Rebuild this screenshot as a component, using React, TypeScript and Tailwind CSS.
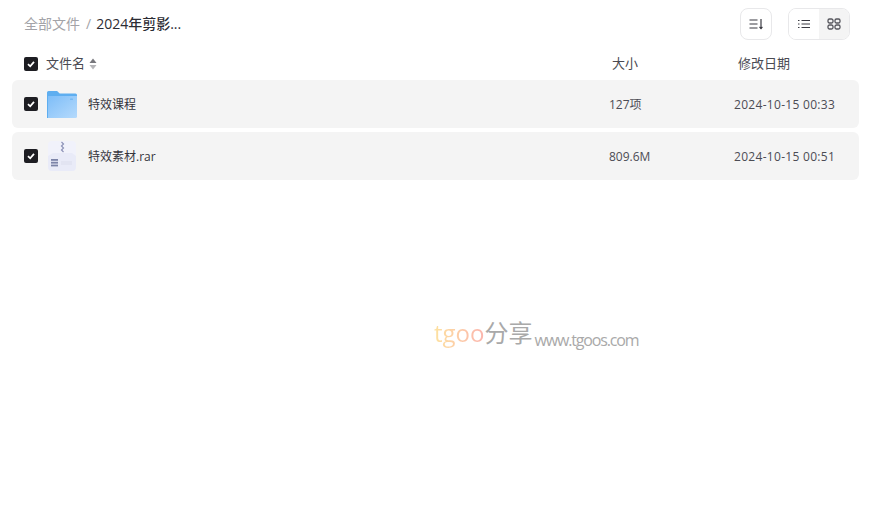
import type { ReactElement } from "react";

const FONT = "font-['Open_Sans','Noto_Sans_CJK_SC',sans-serif]";

type FileRow = {
  readonly name: string;
  readonly kind: "folder" | "rar";
  readonly size: string;
  readonly date: string;
};

const ROWS: readonly FileRow[] = [
  { name: "特效课程", kind: "folder", size: "127项", date: "2024-10-15 00:33" },
  { name: "特效素材.rar", kind: "rar", size: "809.6M", date: "2024-10-15 00:51" },
];

function Checked(): ReactElement {
  return (
    <span className="flex h-[14px] w-[14px] shrink-0 items-center justify-center rounded-[2px] bg-[#1d1d22]">
      <svg width="10" height="10" viewBox="0 0 10 10" fill="none">
        <path d="M2 5.2 4.2 7.3 8 2.9" stroke="#fff" strokeWidth="1.8" />
      </svg>
    </span>
  );
}

function FolderIcon(): ReactElement {
  return (
    <svg width="30" height="27" viewBox="0 0 30 27" className="shrink-0">
      <defs>
        <linearGradient id="folderFront" x1="0" y1="0" x2="1" y2="1">
          <stop offset="0" stopColor="#7dbdf8" />
          <stop offset="1" stopColor="#b5dafc" />
        </linearGradient>
      </defs>
      <path d="M0 1.5A1.5 1.500 0 0 1 1.500 0h8.600l2.600 2.600H28.500A1.500 1.500 0 0 1 30 4.100V10H0Z" fill="#5eaef0" />
      <path d="M0 5h30V25.500A1.500 1.500 0 0 1 28.500 27H1.500A1.500 1.500 0 0 1 0 25.500Z" fill="url(#folderFront)" />
      <path d="M0 5h1V27H0Z" fill="#5eaef0" />
      <rect x="23" y="7.500" width="3" height="1.500" rx=".5" fill="#5eaef0" opacity=".6" />
    </svg>
  );
}

function RarIcon(): ReactElement {
  return (
    <svg width="30" height="30" viewBox="0 0 30 30" className="shrink-0">
      <path d="M5 0h20a4 4 0 0 1 4 4v22a4 4 0 0 1-4 4H5a4 4 0 0 1-4-4V4a4 4 0 0 1 4-4Z" fill="#f1f2fb" />
      <path d="M1 15 6 12h19l4 3v11a4 4 0 0 1-4 4H5a4 4 0 0 1-4-4Z" fill="#e9ebf8" />
      <path d="M14.500 1 16.500 3 14.500 5 16.500 7 14.500 9 16.500 11" stroke="#8d93b8" strokeWidth="1.200" fill="none" />
      <rect x="4" y="18" width="7" height="1.800" fill="#7c84a8" />
      <rect x="4" y="20.800" width="7" height="1.800" fill="#7c84a8" />
      <rect x="4" y="23.600" width="7" height="1.800" fill="#7c84a8" />
      <rect x="14" y="20" width="11" height="4" fill="#e2e4f2" />
    </svg>
  );
}

export default function App(): ReactElement {
  return (
    <div className={`relative h-[514px] w-[874px] overflow-hidden bg-white ${FONT}`}>
      <div className="flex h-12 items-center justify-between pl-6 pr-6">
        <div className="flex items-center text-sm">
          <span className="text-[#a3a3a8]">全部文件</span>
          <span className="ml-[6px] mr-[5px] text-[#a3a3a8]">/</span>
          <span className="font-medium text-[#2c2c34]">2024年剪影...</span>
        </div>
        <div className="flex items-center gap-4">
          <button type="button" className="flex h-8 w-8 items-center justify-center rounded-lg border border-[#e8e8ea] bg-white">
            <svg width="16" height="16" viewBox="0 0 16 16" fill="none" stroke="#3a3a42" strokeWidth="1.200">
              <path d="M1.500 4h8M1.500 8h8M1.500 12h8M13 3v9.500" />
              <path d="M11.500 10.800 13 12.500l1.400-1.700" />
            </svg>
          </button>
          <div className="flex h-8 w-[62px] overflow-hidden rounded-lg border border-[#e8e8ea]">
            <span className="flex w-[30px] items-center justify-center bg-white">
              <svg width="14" height="14" viewBox="0 0 14 14" stroke="#3a3a42" strokeWidth="1" fill="none">
                <path d="M1 3.500h1.500M1 7h1.500M1 10.500h1.500M4.500 3.500H13M4.500 7H13M4.500 10.500H13" />
              </svg>
            </span>
            <span className="flex flex-1 items-center justify-center bg-[#f4f4f4]">
              <svg width="14" height="14" viewBox="0 0 14 14" stroke="#55555c" strokeWidth="1.300" fill="none">
                <rect x="1" y="2" width="5" height="4" rx="1.500" />
                <rect x="8" y="2" width="5" height="4" rx="1.500" />
                <rect x="1" y="8" width="5" height="4" rx="1.500" />
                <rect x="8" y="8" width="5" height="4" rx="1.500" />
              </svg>
            </span>
          </div>
        </div>
      </div>

      <div className="flex h-8 items-center text-[13px] text-[#4a4a52]">
        <div className="flex flex-1 items-center pl-6">
          <Checked />
          <span className="ml-2">文件名</span>
          <svg width="8" height="12" viewBox="0 0 8 12" className="ml-1">
            <path d="M4 .5 7.500 5H.500Z" fill="#77777c" />
            <path d="M4 11.500 .500 7h7Z" fill="#b5b5b8" />
          </svg>
        </div>
        <span className="w-[126px]">大小</span>
        <span className="w-[136px]">修改日期</span>
      </div>

      <div className="mx-3 flex w-[847px] flex-col gap-1">
        {ROWS.map((row) => (
          <div key={row.name} className="flex h-12 items-center rounded-md bg-[#f4f4f4] pl-3 text-xs text-[#4c4c54]">
            <Checked />
            <span className="ml-[9px] flex w-[30px] justify-center">
              {row.kind === "folder" ? <FolderIcon /> : <RarIcon />}
            </span>
            <span className="ml-[11px] flex-1 pt-0.5 text-[#34343c]">{row.name}</span>
            <span className="w-[125px] pt-0.5">{row.size}</span>
            <span className="w-[125px] pt-0.5 tracking-[0.3px]">{row.date}</span>
          </div>
        ))}
      </div>

      {/* 浮水印，疊在頁面上 */}
      <div className="absolute left-[434px] top-[317px] flex items-baseline whitespace-nowrap">
        <span className="bg-gradient-to-r from-[#fde2a0] to-[#fbb5ad] bg-clip-text text-[24px] leading-8 text-transparent">tgoo</span>
        <span className="text-[24px] leading-8 text-[#a9a9a9]">分享</span>
        <span className="ml-[2px] translate-y-[4px] text-[16px] leading-8 tracking-[-1.15px] text-[#a9a9a9]">www.tgoos.com</span>
      </div>
    </div>
  );
}
